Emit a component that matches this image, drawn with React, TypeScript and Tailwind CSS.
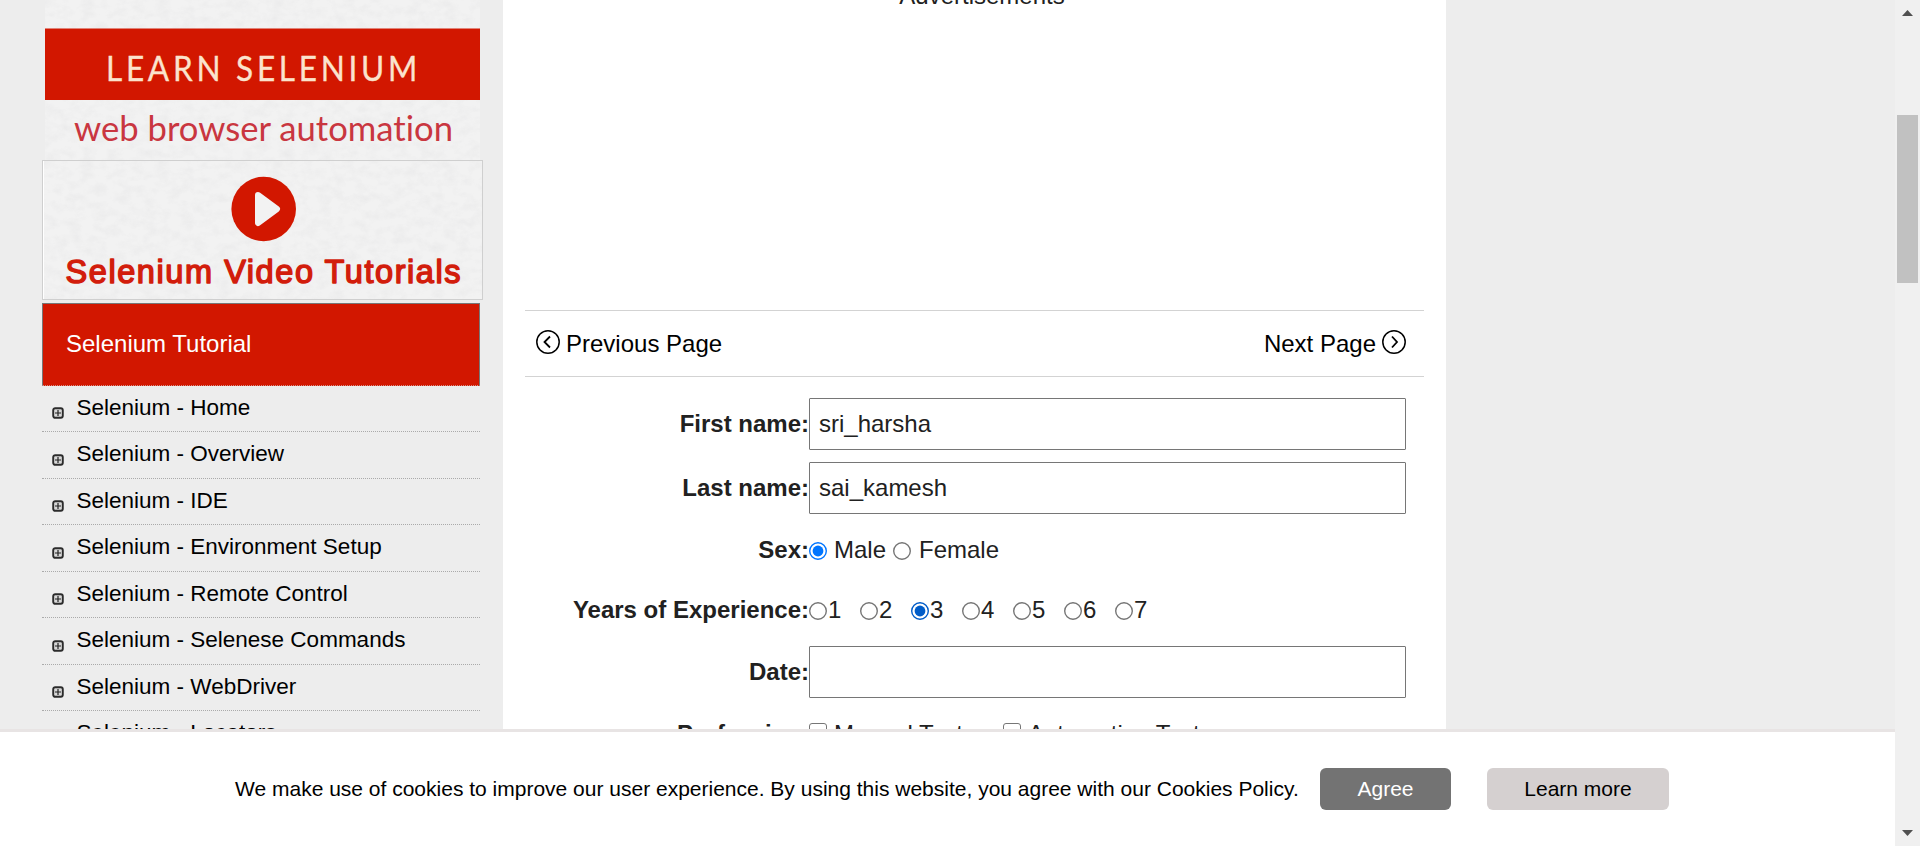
import type { ReactNode } from "react";

const menuItems = [
  "Selenium - Home",
  "Selenium - Overview",
  "Selenium - IDE",
  "Selenium - Environment Setup",
  "Selenium - Remote Control",
  "Selenium - Selenese Commands",
  "Selenium - WebDriver",
  "Selenium - Locators",
];

function PaperTexture({ id }: { id: string }) {
  return (
    <>
      <filter id={id} x="0" y="0" width="100%" height="100%">
        <feTurbulence type="fractalNoise" baseFrequency="0.08 0.12" numOctaves="4" seed="4" />
        <feColorMatrix values="0 0 0 0 0.5  0 0 0 0 0.5  0 0 0 0 0.52  0.5 0 0 0 -0.2" />
      </filter>
      <rect width="100%" height="100%" fill="#f2f2f2" />
      <rect width="100%" height="100%" filter={`url(#${id})`} opacity="0.5" />
    </>
  );
}

function LearnBanner() {
  return (
    <svg className="ml-[3px] block h-[160px] w-[435px] shrink-0" viewBox="0 0 435 160">
      <PaperTexture id="paper-top" />
      <rect y="28.5" width="435" height="71.5" fill="#d21700" />
      <text x="61" y="81" fontFamily="Lato, sans-serif" fontSize="34" fill="#fbe3cd" stroke="#fbe3cd" strokeWidth="0.3" textLength="315" lengthAdjust="spacingAndGlyphs" letterSpacing="4">
        LEARN SELENIUM
      </text>
      <text x="29" y="140.5" className="[font-variant-ligatures:none]" fontFamily="Lato, sans-serif" fontSize="35" fill="#c93640" textLength="379" lengthAdjust="spacingAndGlyphs">
        web browser automation
      </text>
    </svg>
  );
}

function VideoBanner() {
  return (
    <div className="h-[140px] w-[441px] shrink-0 border border-[#cfcfcf] bg-white pl-px">
      <svg className="block h-[138px] w-[438px]" viewBox="0 0 438 138">
        <PaperTexture id="paper-video" />
        <circle cx="219.7" cy="48" r="32.3" fill="#d21700" />
        <path d="M214 34 L233 48 L214 62 Z" fill="#f2f2f2" stroke="#f2f2f2" strokeWidth="6" strokeLinejoin="round" />
        <text x="21.5" y="122" fontFamily="'Liberation Sans', sans-serif" fontSize="32.5" fill="#d21d0c" stroke="#d21d0c" strokeWidth="1.5" strokeLinejoin="round" textLength="395" lengthAdjust="spacing">
          Selenium Video Tutorials
        </text>
      </svg>
    </div>
  );
}

function Bullet() {
  return (
    <svg className="mt-[11px] h-3 w-3" viewBox="0 0 12 12">
      <rect x="1.2" y="1.2" width="9.6" height="9.6" rx="2" fill="#d8d8d8" stroke="#2b2b2b" strokeWidth="1.9" />
      <path d="M6 3v6M3 6h6" stroke="#222" strokeWidth="1.2" />
    </svg>
  );
}

function Radio({ checked, dark }: { checked?: boolean; dark?: boolean }) {
  const color = checked ? (dark ? "#005cc8" : "#0075ff") : "#767676";
  return (
    <svg className="h-[18px] w-[18px] shrink-0" viewBox="0 0 18 18">
      <circle cx="9" cy="9" r="8.3" fill="#fff" stroke={color} strokeWidth="1.4" />
      {checked && <circle cx="9" cy="9" r="5.4" fill={color} />}
    </svg>
  );
}

function Checkbox() {
  return <span className="h-[18px] w-[18px] shrink-0 rounded-[3px] border-[1.5px] border-[#767676] bg-white" />;
}

function Arrow({ next }: { next?: boolean }) {
  return (
    <svg className="mt-[-3px] h-6 w-6" viewBox="0 0 24 24" fill="none" stroke="#000">
      <circle cx="12" cy="12" r="11.2" strokeWidth="1.5" />
      <path d={next ? "M10 6.5l5 5.5-5 5.5" : "M14 6.5L8.5 12l5.5 5.5"} strokeWidth="1.8" />
    </svg>
  );
}

function Row({ label, className, children }: { label: string; className: string; children: ReactNode }) {
  return (
    <div className={`flex items-center ${className}`}>
      <div className="w-[306px] shrink-0 text-right font-bold whitespace-nowrap">{label}</div>
      {children}
    </div>
  );
}

function TextField({ value }: { value: string }) {
  return (
    <input
      className="h-[52px] w-[597px] rounded-[1px] border border-[#767676] bg-white px-[9px] text-[24px] text-[#212121] outline-none"
      defaultValue={value}
    />
  );
}

export default function App() {
  return (
    <div className="relative flex h-[846px] w-full overflow-hidden bg-[#ededed] font-['Liberation_Sans',Arial,sans-serif] text-[24px] leading-[28px] text-[#212121]">
      <aside className="flex w-[503px] shrink-0 flex-col pl-[42px]">
        <LearnBanner />
        <VideoBanner />
        <div className="mt-[3px] flex h-[83px] w-[438px] shrink-0 items-center border-x border-t border-b border-x-[#777] border-t-[#777] border-b-[#d98e85] bg-[#d21700] pb-[2px] pl-[23px] text-white [border-bottom-style:dotted]">
          Selenium Tutorial
        </div>
        <ul className="mt-[-0.5px] w-[438px] text-[22.5px] text-black">
          {menuItems.map((item) => (
            <li key={item} className="flex h-[46.5px] items-center border-b border-dotted border-[#aaa] pb-px pl-[10px]">
              <Bullet />
              <span className="ml-[12.5px]">{item}</span>
            </li>
          ))}
        </ul>
      </aside>

      <main className="w-[943px] shrink-0 bg-white">
        <div className="mt-[-18px] h-[328px] pl-[15px] text-center">Advertisements</div>
        <nav className="mx-[22px] flex h-[67px] items-center justify-between border-y border-[#d3d3d3] pr-[18px] pl-[11px] text-black">
          <span className="flex items-center gap-[6px]">
            <Arrow />
            Previous Page
          </span>
          <span className="flex items-center gap-[6px]">
            Next Page
            <Arrow next />
          </span>
        </nav>
        <form className="pt-[21px]">
          <Row label="First name:" className="h-[52px]">
            <TextField value="sri_harsha" />
          </Row>
          <Row label="Last name:" className="mt-3 h-[52px]">
            <TextField value="sai_kamesh" />
          </Row>
          <Row label="Sex:" className="mt-[11px] h-[50px]">
            <span className="flex items-center pt-[2px]">
              <Radio checked />
            </span>
            <span className="ml-[7px] w-[59px]">Male</span>
            <span className="flex items-center pt-[2px]">
              <Radio />
            </span>
            <span className="ml-[8px]">Female</span>
          </Row>
          <Row label="Years of Experience:" className="mt-[10px] h-[50px]">
            {[1, 2, 3, 4, 5, 6, 7].map((n) => (
              <span key={n} className="flex w-[51px] items-center">
                <span className="flex items-center pt-[2px]">
                  <Radio checked={n === 3} dark />
                </span>
                <span className="ml-px">{n}</span>
              </span>
            ))}
          </Row>
          <Row label="Date:" className="mt-[11px] h-[52px]">
            <TextField value="" />
          </Row>
          <Row label="Profession:" className="mt-[14px] h-[44px]">
            <span className="flex pb-1">
              <Checkbox />
            </span>
            <span className="ml-[7px] w-[169px]">Manual Tester</span>
            <span className="flex pb-1">
              <Checkbox />
            </span>
            <span className="ml-[7px]">Automation Tester</span>
          </Row>
        </form>
      </main>

      <div className="min-w-0 flex-1" />

      <div className="flex w-[25px] shrink-0 flex-col items-center bg-[#f0f0f0]">
        <svg className="mt-[10px] h-[6px] w-[11px]" viewBox="0 0 11 6">
          <path d="M0 6L5.5 0 11 6z" fill="#505050" />
        </svg>
        <div className="mt-[99px] h-[168px] w-[21px] bg-[#c1c1c1]" />
        <svg className="mt-auto mb-[10px] h-[6px] w-[11px]" viewBox="0 0 11 6">
          <path d="M0 0h11L5.5 6z" fill="#505050" />
        </svg>
      </div>

      <footer className="absolute bottom-0 left-0 flex h-[117px] w-[1895px] items-center border-t-[3px] border-[#e8e4e4] bg-white pl-[235px] text-[21px] text-black">
        <span className="w-[1085px] whitespace-nowrap">
          We make use of cookies to improve our user experience. By using this website, you agree with our Cookies Policy.
        </span>
        <button className="h-[42px] w-[131px] rounded-[6px] bg-[#737373] text-white">Agree</button>
        <button className="ml-[36px] h-[42px] w-[182px] rounded-[6px] bg-[#d5d0d0]">Learn more</button>
      </footer>
    </div>
  );
}
